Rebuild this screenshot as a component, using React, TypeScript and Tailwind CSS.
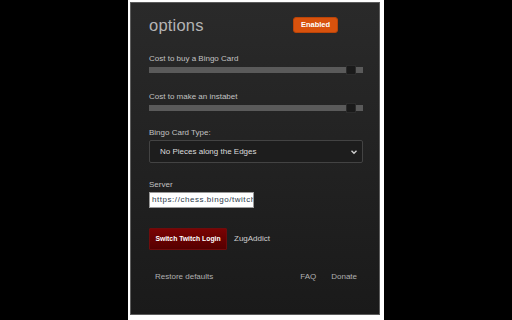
import React from "react";

function Slider() {
  return (
    <div className="flex items-center h-[10px] w-[214px]">
      <div className="flex-1 h-[6px] bg-[#5a5a5a]" />
      <div className="w-[10px] h-[10px] bg-[#1a1a1a] border border-[#2c2c2c]" />
      <div className="w-[7px] h-[6px] bg-[#5a5a5a]" />
    </div>
  );
}

export default function App() {
  const font = { fontFamily: '"Liberation Sans", Arial, sans-serif' };
  return (
    <div className="w-[512px] h-[320px] bg-black flex justify-center" style={font}>
      <div className="w-[256px] h-[320px] bg-white pl-[2px] pt-[2px] pr-[4px] pb-[5px] flex">
        <div className="flex-1 border border-[#5c5c5c] bg-gradient-to-b from-[#2a2a2a] to-[#1a1a1a] pl-[18px] pr-[15px] flex flex-col">
          <div className="mt-[14px] h-[16px] flex items-center justify-between pr-[26px]">
            <span className="text-[16.5px] leading-[20px] text-[#b4b4b4] tracking-[0.2px]">options</span>
            <span className="h-[16px] w-[45px] rounded-[3px] bg-[#d8520d] border border-[#b94408] text-white font-bold text-[7.5px] flex items-center justify-center whitespace-nowrap">
              Enabled
            </span>
          </div>
          <div className="mt-[21px] text-[8px] leading-[10px] text-[#c2c2c2]">Cost to buy a Bingo Card</div>
          <div className="mt-[1px]"><Slider /></div>
          <div className="mt-[17px] text-[8px] leading-[10px] text-[#c2c2c2]">Cost to make an instabet</div>
          <div className="mt-[1px]"><Slider /></div>
          <div className="mt-[15px] text-[8px] leading-[10px] text-[#c2c2c2]">Bingo Card Type:</div>
          <div className="mt-[2px] w-[214px] h-[23px] rounded-[2px] border border-[#434343] bg-[#1d1d1d] flex items-center pl-[10px] pr-[4px] text-[8px] text-[#dcdcdc]">
            <span className="flex-1">No Pieces along the Edges</span>
            <svg width="8" height="8" viewBox="0 0 8 8">
              <path d="M1.5 2.8 L4 5.3 L6.5 2.8" fill="none" stroke="#cfcfcf" strokeWidth="1.4" />
            </svg>
          </div>
          <div className="mt-[17px] text-[8px] leading-[10px] text-[#c2c2c2]">Server</div>
          <div className="mt-[2px] w-[105px] h-[16px] bg-white border border-[#9a9a9a] overflow-hidden whitespace-nowrap pl-[2px] text-[8px] leading-[14px] tracking-[0.55px] text-[#2b3a4a]">
            https://chess.bingo/twitch
          </div>
          <div className="mt-[20px] flex items-center">
            <div className="w-[78px] h-[22px] bg-gradient-to-b from-[#7a0303] to-[#560000] border border-[#6e0c0c] rounded-[1px] flex items-center justify-center text-white font-bold text-[6.8px] whitespace-nowrap">
              Switch Twitch Login
            </div>
            <span className="ml-[7px] text-[8px] text-[#cfcfcf]">ZugAddict</span>
          </div>
          <div className="mt-[22px] flex items-center pl-[6px] pr-[7px] text-[8px] leading-[10px] text-[#b0b0b0]">
            <span className="flex-1">Restore defaults</span>
            <span>FAQ</span>
            <span className="ml-[15px]">Donate</span>
          </div>
        </div>
      </div>
    </div>
  );
}
